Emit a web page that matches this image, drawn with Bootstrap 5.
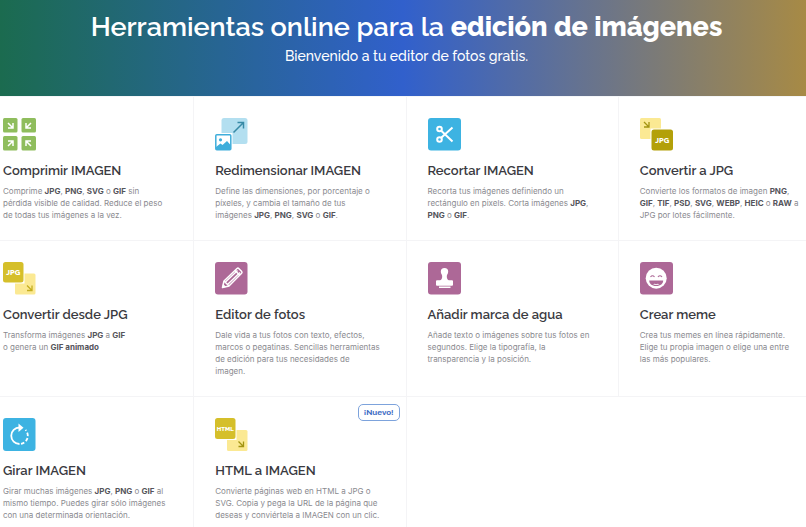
<!DOCTYPE html>
<html lang="es">
<head>
<meta charset="utf-8">
<meta name="viewport" content="width=device-width, initial-scale=1">
<title>Herramientas online para la edición de imágenes</title>
<link href="https://cdn.jsdelivr.net/npm/bootstrap@5.3.0/dist/css/bootstrap.min.css" rel="stylesheet">
<style>
body { font-family: Raleway, "Open Sans", sans-serif; color: #3a3a41; overflow-x: hidden; }
.hero { background: linear-gradient(90deg, #1b6b4f 0%, #3160cc 50%, #a78a45 100%); padding: 8px 0 30px 7px; }
.hero h1 { font: 600 27px/38px Raleway, Lato, sans-serif; }
.hero h1 strong { font-weight: 800; }
.hero p { font: 500 14px/20px Raleway, Lato, sans-serif; }
.tools-wrap { overflow: hidden; border-top: 1px solid #f4f6f8; }
.tools { margin: 0 -25px 0 -18px; }
.tool { padding: 21px 0 19px 21px; border-right: 1px solid #f4f4f6; border-bottom: 1px solid #f4f4f6; white-space: nowrap; }
.tool svg { display: block; width: 33px; height: 33px; }
.tool h2 { font: 600 13px/20px Raleway, Lato, sans-serif; margin: 10px 0 4px; }
.tool p { font-family: Inter, "Open Sans", sans-serif; font-size: 8px; line-height: 12px; color: #8a8a8f; }
.tool p b { color: #55555b; font-weight: 700; }
.tool-new { position: absolute; top: 7px; right: 6px; font-size: 8px; line-height: 15px; font-weight: 700; color: #3c6bc4; border: 1px solid #7da3dc; border-radius: 5px; padding: 0 5px; }
</style>
<script src="https://cdn.jsdelivr.net/npm/bootstrap@5.3.0/dist/js/bootstrap.bundle.min.js"></script>
</head>
<body>
<header class="hero text-center text-white">
  <h1 class="mb-0">Herramientas online para la <strong>edición de imágenes</strong></h1>
  <p class="mb-0">Bienvenido a tu editor de fotos gratis.</p>
</header>
<main class="tools-wrap">
  <div class="row g-0 tools">
    <a href="#comprimir" class="col-3 tool text-reset text-decoration-none">
      <svg viewBox="0 0 33 33" aria-hidden="true"><g fill="#8fbd5d"><rect width="14.500" height="14.500" rx="1.500"/><rect x="18.500" width="14.500" height="14.500" rx="1.500"/><rect y="18" width="14.500" height="14.500" rx="1.500"/><rect x="18.500" y="18" width="14.500" height="14.500" rx="1.500"/></g><g fill="none" stroke="#fff" stroke-width="1.500"><path d="M5 5l4.500 4.500M10 5v5H5M28 5l-4.500 4.500M23 5v5h5M5 28l4.500-4.500M10 28v-5H5M28 28l-4.500-4.500M23 28v-5h5"/></g></svg>
      <h2>Comprimir IMAGEN</h2>
      <p class="mb-0">Comprime <b>JPG</b>, <b>PNG</b>, <b>SVG</b> o <b>GIF</b> sin<br>pérdida visible de calidad. Reduce el peso<br>de todas tus imágenes a la vez.</p>
    </a>
    <a href="#redimensionar" class="col-3 tool text-reset text-decoration-none">
      <svg viewBox="0 0 33 33" aria-hidden="true"><rect x="6.500" width="26" height="26" rx="2.500" fill="#b3dff0"/><path d="M18.500 14.500L28 5M22.500 4.500H28.500V10.500" fill="none" stroke="#388aa6" stroke-width="1.500"/><rect x="-1" y="15" width="18.500" height="19" fill="#fff"/><rect x=".8" y="16.800" width="15" height="15" rx="1" fill="#fff" stroke="#3faedb" stroke-width="1.500"/><circle cx="5.500" cy="21.800" r="1.600" fill="#3faedb"/><path d="M1 29l4.500-3.500 2 1.500 4.500-4 4 4.500v4.500H1z" fill="#3faedb"/></svg>
      <h2>Redimensionar IMAGEN</h2>
      <p class="mb-0">Define las dimensiones, por porcentaje o<br>píxeles, y cambia el tamaño de tus<br>imágenes <b>JPG</b>, <b>PNG</b>, <b>SVG</b> o <b>GIF</b>.</p>
    </a>
    <a href="#recortar" class="col-3 tool text-reset text-decoration-none">
      <svg viewBox="0 0 33 33" aria-hidden="true"><rect width="33" height="32.500" rx="3" fill="#3db3e2"/><g fill="none" stroke="#fff" stroke-width="2"><circle cx="11.500" cy="11" r="2.300"/><circle cx="11.500" cy="21.500" r="2.300"/><path d="M13.200 12.700L24.500 23.500M13.200 19.800L24.500 9.500"/></g></svg>
      <h2>Recortar IMAGEN</h2>
      <p class="mb-0">Recorta tus imágenes definiendo un<br>rectángulo en pixels. Corta imágenes <b>JPG</b>,<br><b>PNG</b> o <b>GIF</b>.</p>
    </a>
    <a href="#a-jpg" class="col-3 tool text-reset text-decoration-none">
      <svg viewBox="0 0 33 33" aria-hidden="true"><rect width="21" height="21" rx="1.500" fill="#fbe993"/><path d="M4 4l4.500 4.500M9 4v5H4" fill="none" stroke="#a39411" stroke-width="1.300"/><rect x="10.500" y="10.500" width="24" height="24" fill="#fff"/><rect x="11.500" y="11.500" width="21.500" height="21" rx="2.500" fill="#b3a009"/><text x="22.200" y="24.700" text-anchor="middle" font-family="Raleway, Open Sans" font-size="7.500" font-weight="800" fill="#fff">JPG</text></svg>
      <h2>Convertir a JPG</h2>
      <p class="mb-0">Convierte los formatos de imagen <b>PNG</b>,<br><b>GIF</b>, <b>TIF</b>, <b>PSD</b>, <b>SVG</b>, <b>WEBP</b>, <b>HEIC</b> o <b>RAW</b> a<br>JPG por lotes fácilmente.</p>
    </a>
    <a href="#desde-jpg" class="col-3 tool text-reset text-decoration-none">
      <svg viewBox="0 0 33 33" aria-hidden="true"><rect x="12" y="11.500" width="20.500" height="21" rx="1.500" fill="#fbe993"/><path d="M24 23.500l4.500 4.500M29 23.500v5h-5" fill="none" stroke="#c4ae20" stroke-width="1.300"/><rect x="-1" y="-1" width="22.500" height="22.500" fill="#fff"/><rect width="20.500" height="20.500" rx="2.500" fill="#d5bf2a"/><text x="10.300" y="13" text-anchor="middle" font-family="Raleway, Open Sans" font-size="7.500" font-weight="800" fill="#fff">JPG</text></svg>
      <h2>Convertir desde JPG</h2>
      <p class="mb-0">Transforma imágenes <b>JPG</b> a <b>GIF</b><br>o genera un <b>GIF animado</b></p>
    </a>
    <a href="#editor" class="col-3 tool text-reset text-decoration-none">
      <svg viewBox="0 0 33 33" aria-hidden="true"><rect width="32.500" height="32.500" rx="3" fill="#ad6897"/><g fill="none" stroke="#fff" stroke-width="1.500" stroke-linejoin="round"><path d="M7.500 25.500l1.500-6.500L22 6.500q1-.8 2 .2l2.500 2.500q1 1 .1 2L14 24z"/><path d="M10 20.500L22.500 8.500M12.500 22.500L25 10.500M20 8.500l4.800 4.800M9 19l5 5"/></g><path d="M7.200 25.800l.8-4 3.200 3.200z" fill="#fff"/></svg>
      <h2>Editor de fotos</h2>
      <p class="mb-0">Dale vida a tus fotos con texto, efectos,<br>marcos o pegatinas. Sencillas herramientas<br>de edición para tus necesidades de<br>imagen.</p>
    </a>
    <a href="#marca" class="col-3 tool text-reset text-decoration-none">
      <svg viewBox="0 0 33 33" aria-hidden="true"><rect width="33" height="32.500" rx="3" fill="#ad6897"/><path fill="#fff" d="M12.800 9.700a3.700 3.700 0 1 1 7.400 0c0 2.300-1.700 2.700-1.400 5.300.2 1.700 1 3.300 2.200 3.300h3q1 0 1 1v3.500q0 1-1 1H9q-1 0-1-1v-3.500q0-1 1-1h3c1.200 0 2-1.600 2.200-3.300.3-2.600-1.400-3-1.400-5.300zM11 24.500h11.500v1.500H11z"/></svg>
      <h2>Añadir marca de agua</h2>
      <p class="mb-0">Añade texto o imágenes sobre tus fotos en<br>segundos. Elige la tipografía, la<br>transparencia y la posición.</p>
    </a>
    <a href="#meme" class="col-3 tool text-reset text-decoration-none">
      <svg viewBox="0 0 33 33" aria-hidden="true"><rect width="33" height="32.500" rx="3" fill="#ad6897"/><circle cx="16.200" cy="16.200" r="10.500" fill="#fff"/><path d="M9.200 18.500h14c0 3-2.500 5.500-7 5.500s-7-2.500-7-5.500z" fill="#ad6897"/><path d="M13 22.300q1.500-1 3.200 0 1.700-1 3.200 0-3 1.500-6.400 0z" fill="#fff"/><path d="M10.500 15q2-2.500 4 0M18 15q2-2.500 4 0" fill="none" stroke="#ad6897" stroke-width="1.200"/></svg>
      <h2>Crear meme</h2>
      <p class="mb-0">Crea tus memes en línea rápidamente.<br>Elige tu propia imagen o elige una entre<br>las más populares.</p>
    </a>
    <a href="#girar" class="col-3 tool text-reset text-decoration-none">
      <svg viewBox="0 0 33 33" aria-hidden="true"><rect width="32.500" height="33" rx="3" fill="#3db3e2"/><path d="M16.500 26A8.200 8.200 0 0 1 16.500 9.500" fill="none" stroke="#fff" stroke-width="1.800"/><path d="M18 25.800A8.200 8.200 0 0 0 22.500 12" fill="none" stroke="#fff" stroke-width="1.800" stroke-dasharray="3.500 2"/><path d="M15.500 5.500l5 4.200-5 4.200z" fill="#fff"/></svg>
      <h2>Girar IMAGEN</h2>
      <p class="mb-0">Girar muchas imágenes <b>JPG</b>, <b>PNG</b> o <b>GIF</b> al<br>mismo tiempo. Puedes girar sólo imágenes<br>con una determinada orientación.</p>
    </a>
    <a href="#html" class="col-3 tool position-relative text-reset text-decoration-none">
      <span class="tool-new">¡Nuevo!</span>
      <svg viewBox="0 0 33 33" aria-hidden="true"><rect x="12" y="12" width="20.500" height="21" rx="1.500" fill="#fbe993"/><path d="M23.500 23.500l4.500 4.500M28.500 23.500v5h-5" fill="none" stroke="#a39411" stroke-width="1.300"/><rect x="-1" y="-1" width="22.500" height="23" fill="#fff"/><rect width="20.500" height="21" rx="2.500" fill="#d5bf2a"/><text x="10.300" y="12.700" text-anchor="middle" font-family="Raleway, Open Sans" font-size="6" font-weight="800" fill="#fff">HTML</text></svg>
      <h2>HTML a IMAGEN</h2>
      <p class="mb-0">Convierte páginas web en HTML a JPG o<br>SVG. Copia y pega la URL de la página que<br>deseas y conviértela a IMAGEN con un clic.</p>
    </a>
  </div>
</main>
</body>
</html>
